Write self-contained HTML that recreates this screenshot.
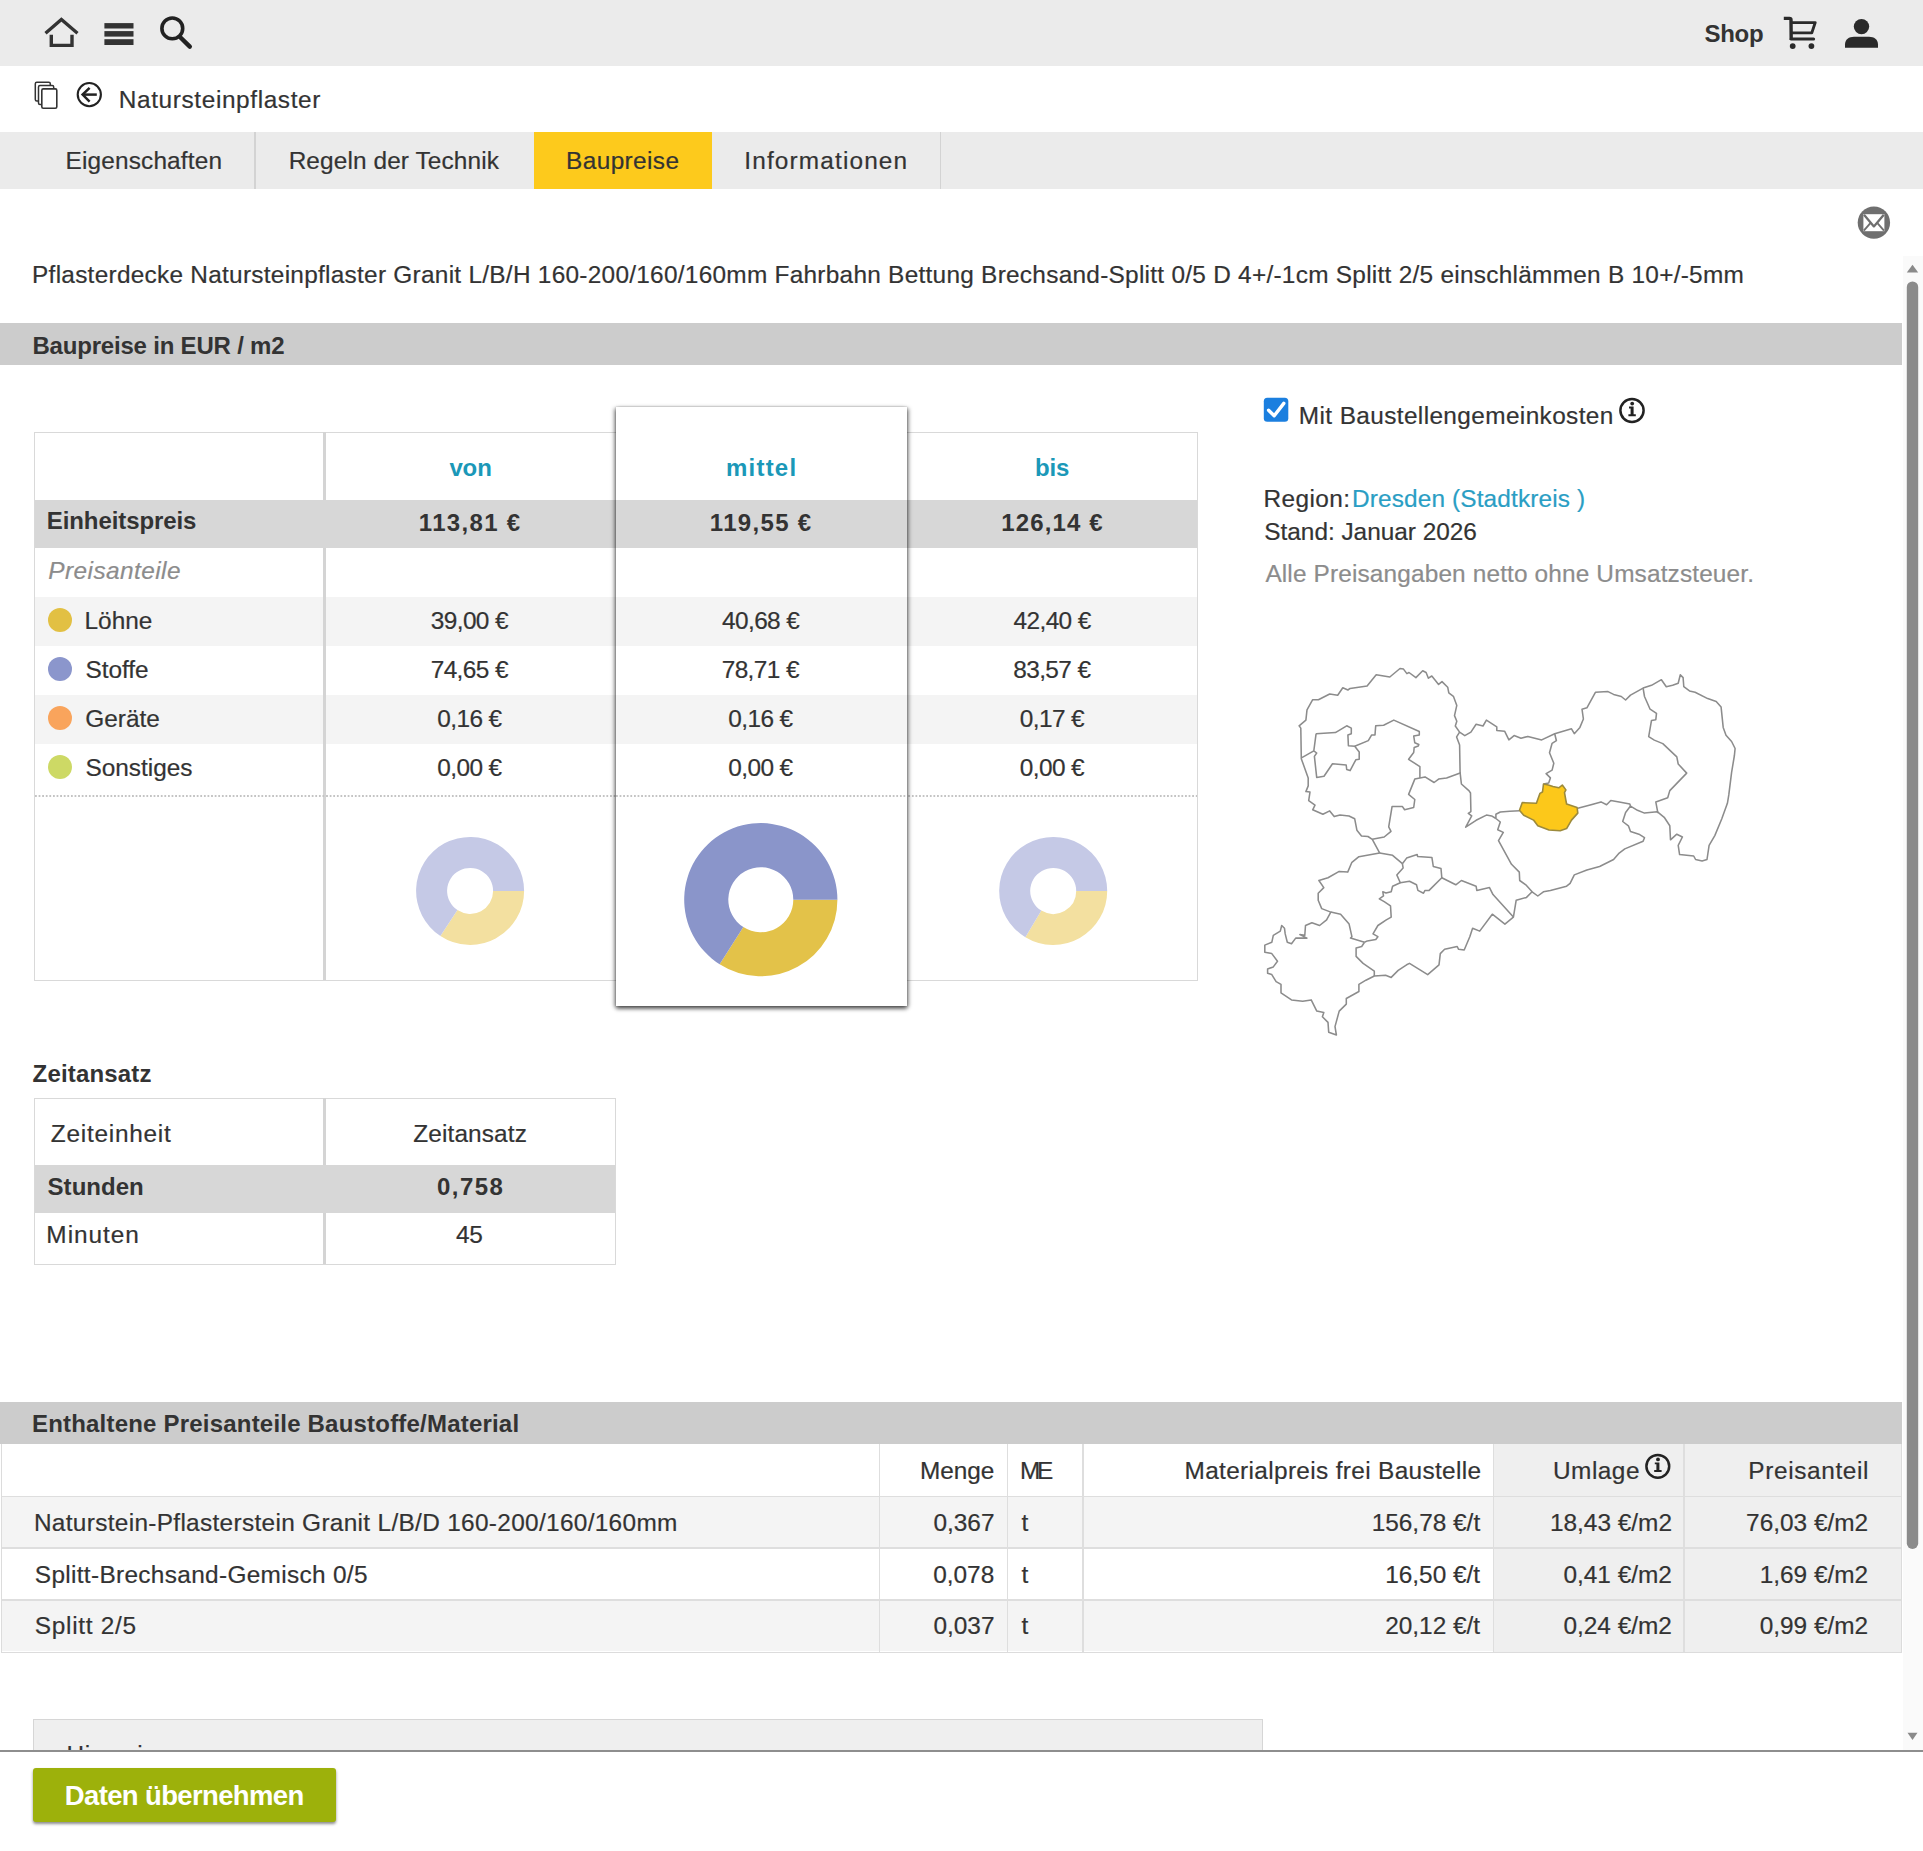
<!DOCTYPE html>
<html><head><meta charset="utf-8"><title>Baupreise</title>
<style>
html,body{margin:0;padding:0;background:#fff;}
body{width:1923px;height:1851px;position:relative;overflow:hidden;font-family:"Liberation Sans",sans-serif;}
.t{position:absolute;white-space:pre;font-family:"Liberation Sans",sans-serif;-webkit-text-stroke:0.2px currentColor;}
.r{position:absolute;}
svg.r{overflow:visible;}
</style></head><body>
<div class="r" style="left:0px;top:0px;width:1923px;height:66px;background:#ebebeb;"></div>
<svg class="r" style="left:0;top:0" width="240" height="66" viewBox="0 0 240 66">
<polyline points="45.5,33.2 61.4,19.4 77.5,33.2" fill="none" stroke="#333" stroke-width="3.3" stroke-linejoin="miter"/>
<polyline points="51.3,34.8 51.3,45.4 72,45.4 72,34.8" fill="none" stroke="#333" stroke-width="3.4"/>
<rect x="104.4" y="23.1" width="29.1" height="5.4" fill="#333"/>
<rect x="104.4" y="31.1" width="29.1" height="5.5" fill="#333"/>
<rect x="104.4" y="39.2" width="29.1" height="5.8" fill="#333"/>
<circle cx="172.3" cy="28.4" r="10.4" fill="none" stroke="#222" stroke-width="3.6"/>
<line x1="180" y1="37" x2="189.8" y2="46.6" stroke="#222" stroke-width="4.4" stroke-linecap="round"/>
</svg>
<div class="t" style="left:1704.58px;top:21.88px;font-size:24.0px;line-height:24.0px;font-weight:700;font-style:normal;color:#333;letter-spacing:-0.340px;-webkit-text-stroke:0;">Shop</div>
<svg class="r" style="left:1770px;top:0" width="130" height="66" viewBox="1770 0 130 66">
<path d="M1783.8,18.4 H1789.4 Q1791,18.4 1791,20 L1791.2,40" fill="none" stroke="#2a2a2a" stroke-width="3.4"/>
<path d="M1790.8,22.6 H1815.2 L1811.8,32.9 H1791.2" fill="none" stroke="#2a2a2a" stroke-width="2.9" stroke-linejoin="round"/>
<path d="M1791.2,39.1 H1813.6" fill="none" stroke="#2a2a2a" stroke-width="3" stroke-linecap="round"/>
<circle cx="1792.7" cy="46.1" r="2.9" fill="#2a2a2a"/>
<circle cx="1811.4" cy="46.1" r="2.9" fill="#2a2a2a"/>
<circle cx="1861.5" cy="26.6" r="7.7" fill="#2a2a2a"/>
<path d="M1845,47.7 V44.5 C1845,39.5 1849,36.8 1854,36.8 H1869 C1874,36.8 1878,39.5 1878,44.5 V47.7 Z" fill="#2a2a2a"/>
</svg>
<svg class="r" style="left:0;top:66px" width="120" height="66" viewBox="0 66 120 66">
<rect x="35.3" y="82.3" width="15" height="18.6" rx="1.5" fill="#fff" stroke="#333" stroke-width="1.5"/>
<rect x="38.5" y="85.6" width="15.2" height="19" rx="1.5" fill="#fff" stroke="#333" stroke-width="1.5"/>
<rect x="41.8" y="88.9" width="15" height="19.3" rx="1.5" fill="#fff" stroke="#333" stroke-width="1.6"/>
<circle cx="89.3" cy="94.6" r="11.6" fill="none" stroke="#222" stroke-width="2.1"/>
<line x1="83" y1="94.6" x2="96.8" y2="94.6" stroke="#222" stroke-width="2.5"/>
<polyline points="89.6,87.8 82.6,94.6 89.6,101.6" fill="none" stroke="#222" stroke-width="2.5"/>
</svg>
<div class="t" style="left:118.85px;top:88.35px;font-size:24.4px;line-height:24.4px;font-weight:400;font-style:normal;color:#333333;letter-spacing:0.608px;">Natursteinpflaster</div>
<div class="r" style="left:0px;top:132px;width:1923px;height:57px;background:#ebebeb;"></div>
<div class="r" style="left:254px;top:132px;width:1.5px;height:57px;background:#d3d3d3;"></div>
<div class="r" style="left:939.5px;top:132px;width:1.5px;height:57px;background:#d3d3d3;"></div>
<div class="r" style="left:533.7px;top:132px;width:178.5px;height:57px;background:#fdca1c;"></div>
<div class="t" style="left:65.55px;top:148.55px;font-size:24.4px;line-height:24.4px;font-weight:400;font-style:normal;color:#333;letter-spacing:0.155px;">Eigenschaften</div>
<div class="t" style="left:288.65px;top:148.55px;font-size:24.4px;line-height:24.4px;font-weight:400;font-style:normal;color:#333;letter-spacing:0.109px;">Regeln der Technik</div>
<div class="t" style="left:566.05px;top:148.55px;font-size:24.4px;line-height:24.4px;font-weight:400;font-style:normal;color:#333;letter-spacing:0.394px;">Baupreise</div>
<div class="t" style="left:744.30px;top:148.55px;font-size:24.4px;line-height:24.4px;font-weight:400;font-style:normal;color:#333;letter-spacing:1.140px;">Informationen</div>
<svg class="r" style="left:1850px;top:200px" width="50" height="50" viewBox="1850 200 50 50">
<circle cx="1873.9" cy="222.6" r="16.2" fill="#6f6f6f"/>
<rect x="1863.4" y="214.2" width="21" height="17" fill="#fff"/>
<polyline points="1864,214.8 1873.9,226.4 1883.8,214.8" fill="none" stroke="#6f6f6f" stroke-width="2.3" stroke-linejoin="round"/>
<line x1="1863.8" y1="230.6" x2="1870.4" y2="223.2" stroke="#6f6f6f" stroke-width="1.9"/>
<line x1="1884" y1="230.6" x2="1877.4" y2="223.2" stroke="#6f6f6f" stroke-width="1.9"/>
</svg>
<div class="t" style="left:32.05px;top:262.65px;font-size:24.4px;line-height:24.4px;font-weight:400;font-style:normal;color:#333;letter-spacing:0.268px;">Pflasterdecke Natursteinpflaster Granit L/B/H 160-200/160/160mm Fahrbahn Bettung Brechsand-Splitt 0/5 D 4+/-1cm Splitt 2/5 einschlämmen B 10+/-5mm</div>
<div class="r" style="left:0px;top:323px;width:1902px;height:42px;background:#cccccc;"></div>
<div class="t" style="left:32.44px;top:333.88px;font-size:24.0px;line-height:24.0px;font-weight:700;font-style:normal;color:#333;letter-spacing:-0.198px;-webkit-text-stroke:0;">Baupreise in EUR / m2</div>
<div class="r" style="left:33.5px;top:432px;width:1164.0px;height:549px;background:#fff;box-sizing:border-box;border:1px solid #d9d9d9;"></div>
<div class="r" style="left:34.5px;top:499.5px;width:1162.0px;height:48.0px;background:#d7d7d7;"></div>
<div class="r" style="left:34.5px;top:597px;width:1162.0px;height:49px;background:#f4f4f4;"></div>
<div class="r" style="left:34.5px;top:695px;width:1162.0px;height:49px;background:#f4f4f4;"></div>
<div class="r" style="left:323px;top:432px;width:3px;height:67.5px;background:#d4d4d4;"></div>
<div class="r" style="left:323px;top:547.5px;width:3px;height:432.5px;background:#d4d4d4;"></div>
<div class="r" style="left:905.5px;top:432px;width:1.5px;height:549px;background:#d4d4d4;"></div>
<div class="r" style="left:34.5px;top:795px;width:1162.0px;height:1.5px;background-image:linear-gradient(to right,#c4c4c4 50%,transparent 50%);background-size:3.6px 1.5px"></div>
<div class="r" style="left:616px;top:407px;width:291px;height:599px;background:#fff;box-shadow:0 3px 4px rgba(0,0,0,0.45), -2px 1px 4px rgba(0,0,0,0.3), 2px 1px 4px rgba(0,0,0,0.3), 0 0 1px rgba(0,0,0,0.25);"></div>
<div class="r" style="left:616px;top:499.5px;width:291px;height:48.0px;background:#d7d7d7;"></div>
<div class="r" style="left:616px;top:597px;width:291px;height:49px;background:#f4f4f4;"></div>
<div class="r" style="left:616px;top:695px;width:291px;height:49px;background:#f4f4f4;"></div>
<div class="r" style="left:616px;top:795px;width:291px;height:1.5px;background-image:linear-gradient(to right,#c4c4c4 50%,transparent 50%);background-size:3.6px 1.5px"></div>
<div class="t" style="left:449.38px;top:455.98px;font-size:24.0px;line-height:24.0px;font-weight:700;font-style:normal;color:#1b98b8;letter-spacing:-0.120px;-webkit-text-stroke:0;">von</div>
<div class="t" style="left:725.94px;top:455.98px;font-size:24.0px;line-height:24.0px;font-weight:700;font-style:normal;color:#1b98b8;letter-spacing:1.232px;-webkit-text-stroke:0;">mittel</div>
<div class="t" style="left:1034.94px;top:455.98px;font-size:24.0px;line-height:24.0px;font-weight:700;font-style:normal;color:#1b98b8;letter-spacing:-0.080px;-webkit-text-stroke:0;">bis</div>
<div class="t" style="left:46.74px;top:509.18px;font-size:24.0px;line-height:24.0px;font-weight:700;font-style:normal;color:#333;letter-spacing:-0.083px;-webkit-text-stroke:0;">Einheitspreis</div>
<div class="t" style="left:418.86px;top:511.28px;font-size:24.0px;line-height:24.0px;font-weight:700;font-style:normal;color:#333;letter-spacing:1.309px;-webkit-text-stroke:0;">113,81 €</div>
<div class="t" style="left:709.86px;top:511.28px;font-size:24.0px;line-height:24.0px;font-weight:700;font-style:normal;color:#333;letter-spacing:1.309px;-webkit-text-stroke:0;">119,55 €</div>
<div class="t" style="left:1001.36px;top:511.28px;font-size:24.0px;line-height:24.0px;font-weight:700;font-style:normal;color:#333;letter-spacing:1.120px;-webkit-text-stroke:0;">126,14 €</div>
<div class="t" style="left:48.27px;top:558.75px;font-size:24.4px;line-height:24.4px;font-weight:400;font-style:italic;color:#8c8c8c;letter-spacing:0.436px;">Preisanteile</div>
<div class="r" style="left:47.5px;top:608.1px;width:24.4px;height:24.4px;border-radius:50%;background:#e2c043"></div>
<div class="t" style="left:84.55px;top:608.65px;font-size:24.4px;line-height:24.4px;font-weight:400;font-style:normal;color:#333;">Löhne</div>
<div class="t" style="left:430.81px;top:608.65px;font-size:24.4px;line-height:24.4px;font-weight:400;font-style:normal;color:#333;letter-spacing:-0.600px;">39,00 €</div>
<div class="t" style="left:722.06px;top:608.65px;font-size:24.4px;line-height:24.4px;font-weight:400;font-style:normal;color:#333;letter-spacing:-0.604px;">40,68 €</div>
<div class="t" style="left:1013.56px;top:608.65px;font-size:24.4px;line-height:24.4px;font-weight:400;font-style:normal;color:#333;letter-spacing:-0.604px;">42,40 €</div>
<div class="r" style="left:47.5px;top:657.1px;width:24.4px;height:24.4px;border-radius:50%;background:#8b96cc"></div>
<div class="t" style="left:85.40px;top:657.65px;font-size:24.4px;line-height:24.4px;font-weight:400;font-style:normal;color:#333;">Stoffe</div>
<div class="t" style="left:430.68px;top:657.65px;font-size:24.4px;line-height:24.4px;font-weight:400;font-style:normal;color:#333;letter-spacing:-0.598px;">74,65 €</div>
<div class="t" style="left:721.68px;top:657.65px;font-size:24.4px;line-height:24.4px;font-weight:400;font-style:normal;color:#333;letter-spacing:-0.598px;">78,71 €</div>
<div class="t" style="left:1013.24px;top:657.65px;font-size:24.4px;line-height:24.4px;font-weight:400;font-style:normal;color:#333;letter-spacing:-0.599px;">83,57 €</div>
<div class="r" style="left:47.5px;top:706.1px;width:24.4px;height:24.4px;border-radius:50%;background:#f9a45c"></div>
<div class="t" style="left:85.28px;top:706.65px;font-size:24.4px;line-height:24.4px;font-weight:400;font-style:normal;color:#333;">Geräte</div>
<div class="t" style="left:437.28px;top:706.65px;font-size:24.4px;line-height:24.4px;font-weight:400;font-style:normal;color:#333;letter-spacing:-0.598px;">0,16 €</div>
<div class="t" style="left:728.28px;top:706.65px;font-size:24.4px;line-height:24.4px;font-weight:400;font-style:normal;color:#333;letter-spacing:-0.598px;">0,16 €</div>
<div class="t" style="left:1019.78px;top:706.65px;font-size:24.4px;line-height:24.4px;font-weight:400;font-style:normal;color:#333;letter-spacing:-0.598px;">0,17 €</div>
<div class="r" style="left:47.5px;top:755.1px;width:24.4px;height:24.4px;border-radius:50%;background:#cdd965"></div>
<div class="t" style="left:85.40px;top:755.65px;font-size:24.4px;line-height:24.4px;font-weight:400;font-style:normal;color:#333;">Sonstiges</div>
<div class="t" style="left:437.28px;top:755.65px;font-size:24.4px;line-height:24.4px;font-weight:400;font-style:normal;color:#333;letter-spacing:-0.598px;">0,00 €</div>
<div class="t" style="left:728.28px;top:755.65px;font-size:24.4px;line-height:24.4px;font-weight:400;font-style:normal;color:#333;letter-spacing:-0.598px;">0,00 €</div>
<div class="t" style="left:1019.78px;top:755.65px;font-size:24.4px;line-height:24.4px;font-weight:400;font-style:normal;color:#333;letter-spacing:-0.598px;">0,00 €</div>
<svg class="r" style="left:0;top:0" width="1200" height="1010" viewBox="0 0 1200 1010"><path d="M524.1,890.9 A54,54 0 0 1 440.40,936.00 L457.45,910.11 A23,23 0 0 0 493.1,890.9 Z" fill="#f3e0a0"/><path d="M440.40,936.00 A54,54 0 1 1 524.1,890.9 L493.1,890.9 A23,23 0 1 0 457.45,910.11 Z" fill="#c5c9e6"/><path d="M837.4,899.7 A76.6,76.6 0 0 1 719.64,964.30 L743.34,927.11 A32.5,32.5 0 0 0 793.3,899.7 Z" fill="#e3c249"/><path d="M719.64,964.30 A76.6,76.6 0 1 1 837.4,899.7 L793.3,899.7 A32.5,32.5 0 1 0 743.34,927.11 Z" fill="#8a95ca"/><path d="M1107.2,890.9 A54,54 0 0 1 1025.38,937.18 L1041.35,910.61 A23,23 0 0 0 1076.2,890.9 Z" fill="#f3e0a0"/><path d="M1025.38,937.18 A54,54 0 1 1 1107.2,890.9 L1076.2,890.9 A23,23 0 1 0 1041.35,910.61 Z" fill="#c5c9e6"/></svg>
<svg class="r" style="left:1255px;top:390px" width="400" height="40" viewBox="1255 390 400 40">
<rect x="1263.8" y="397.8" width="24.5" height="24" rx="3.5" fill="#1b7fdf"/>
<polyline points="1268.6,410.2 1274.2,415.8 1283.8,403.4" fill="none" stroke="#fff" stroke-width="3.4" stroke-linecap="round" stroke-linejoin="round"/>
<circle cx="1632" cy="410.5" r="11.6" fill="none" stroke="#222" stroke-width="2.5"/>
<circle cx="1632.2" cy="403.6" r="1.9" fill="#222"/>
<path d="M1629,406.6 H1633.6 V414.2 H1635.8 V416.2 H1628.4 V414.2 H1630.6 V408.4 H1629 Z" fill="#222"/>
</svg>
<div class="t" style="left:1298.85px;top:403.65px;font-size:24.4px;line-height:24.4px;font-weight:400;font-style:normal;color:#333;letter-spacing:0.377px;">Mit Baustellengemeinkosten</div>
<div class="t" style="left:1263.45px;top:486.55px;font-size:24.4px;line-height:24.4px;font-weight:400;font-style:normal;color:#333;letter-spacing:0.432px;">Region:</div>
<div class="t" style="left:1352.05px;top:486.55px;font-size:24.4px;line-height:24.4px;font-weight:400;font-style:normal;color:#2a9ec4;letter-spacing:0.128px;">Dresden (Stadtkreis )</div>
<div class="t" style="left:1264.30px;top:520.35px;font-size:24.4px;line-height:24.4px;font-weight:400;font-style:normal;color:#333;letter-spacing:-0.020px;">Stand: Januar 2026</div>
<div class="t" style="left:1265.40px;top:562.45px;font-size:24.4px;line-height:24.4px;font-weight:400;font-style:normal;color:#8c8c8c;letter-spacing:0.144px;">Alle Preisangaben netto ohne Umsatzsteuer.</div>
<svg class="r" style="left:1250px;top:650px" width="500" height="400" viewBox="1250 650 500 400"><polygon points="1299.1,725.8 1305.9,720.1 1307,709.9 1312.7,699.7 1318.4,699.7 1329.7,694 1337.7,695.2 1342.8,687.8 1347.9,690 1350.1,688.4 1367.1,686.1 1376.2,674.7 1389.8,677 1400,668.5 1403.5,669.1 1406.9,673.6 1409,672.5 1415.9,677.6 1422.7,670.8 1426.1,672.5 1428.4,678.2 1431.8,676 1438.6,684.4 1442,681.6 1447.7,687.2 1448.8,692.9 1453.4,696.3 1456.8,705.4 1454.5,715.6 1456.8,721.3 1455.3,726 1459.6,732.1 1464.8,735.6 1470.9,732.1 1476.1,724.3 1483,726 1486.4,720.1 1496.8,726.9 1496.8,730.4 1504.6,731.2 1508.9,739.9 1514.1,735.6 1521,738.2 1527.9,736.4 1541.7,739.9 1554.7,733.8 1571.5,728.8 1574.3,733.7 1579.9,727.4 1583.4,719 1582,709.2 1586.9,707.8 1595.4,692.3 1608,691.6 1613.6,694.4 1621.3,696.5 1625.6,700 1630.5,695.1 1643.1,688.1 1651.5,685.3 1661.4,679.7 1666.3,686.7 1672.6,685.3 1678.2,683.2 1680.3,674.7 1683.1,677.6 1683.8,686.7 1689.5,690.9 1695.1,692.3 1707.7,698.6 1716.2,701.4 1721.1,707.1 1723.2,727.4 1726,735.2 1731.6,741.5 1735.1,748.5 1734.4,755.5 1731.6,772.4 1728.8,794.9 1727.4,803.3 1721.8,818.7 1714.8,835.6 1709.1,845.4 1707,859.5 1702.1,860.9 1695.6,859.5 1693.7,856 1679.6,854.6 1678.2,845.4 1682.4,837 1676.8,834.2 1670.5,839.8 1669.8,825.8 1664.2,817.3 1657.2,811.7 1644.5,813.1 1637.5,810.3 1630.5,806.1 1625.6,812.4 1622.7,821.5 1628.4,825.8 1630.5,831.4 1638.9,834.2 1644.5,837.7 1643.1,841.2 1624.8,848.9 1619.2,853.1 1613.6,859.5 1599.6,866.5 1586.9,870 1574.3,874.9 1570.1,883.3 1566.6,886.2 1550.4,890.4 1543.4,891.8 1537.8,896 1532.1,891.8 1526.5,897.4 1516.2,900.2 1513.4,917.1 1504.9,924.1 1492.3,914.2 1479.7,931.1 1472.6,928.3 1469.8,936.7 1464.2,950 1458.6,949.3 1457.2,946.5 1444.6,949.3 1440.3,953.6 1439,964.8 1427.7,974.6 1409.5,963.4 1406.6,964.8 1398.2,970.4 1391.2,977.4 1385.6,975.3 1374.3,976 1365.9,980.2 1358.9,984.4 1358.9,991.5 1346.3,998.5 1346.3,1004.1 1339.2,1011.1 1335,1026.6 1336.4,1035 1328.7,1032.2 1328,1022.4 1322.4,1016.7 1323.8,1012.5 1316.8,1011.1 1311.2,999.9 1302.7,1001.3 1291.5,999.9 1281,992.9 1281,984.4 1276.1,981.6 1271.8,974.6 1267.6,973.2 1267.6,969 1273.3,966.9 1277.5,961.3 1271.8,953.6 1264.8,952.2 1264.8,945.1 1271.8,942.3 1273.3,935.3 1280.3,931.1 1281.7,925.5 1284.5,928.3 1285.2,933.9 1287.3,942.3 1291.5,943.7 1295.7,938.1 1307,938.1 1299.9,934.6 1304.8,935.3 1305.5,925.5 1311.9,922.7 1319.6,925.5 1326.6,919.9 1330.8,912.1 1321.7,908.6 1318.2,900.2 1318.2,893.2 1323.8,887.6 1318.9,880.5 1328,877.7 1339.2,871.4 1347.7,872.1 1351.9,862.3 1358.9,856.7 1379.6,852.9 1372.3,839.3 1368,836.5 1361.5,835.9 1356.9,830.2 1354.7,818.8 1349,816 1340,815 1334.2,816.6 1329.7,810.9 1322.9,814.3 1312.7,809.8 1315,805.2 1308.7,800.7 1310,792 1305.9,791.6 1308.2,785.9 1308.2,778 1301.3,758.7 1300.8,728.1 1299.1,725.8" fill="#fff" stroke="#8c8c8c" stroke-width="1.55" stroke-linejoin="round"/><polyline points="1316.1,733.7 1335.4,732.6 1346.7,725.8 1351.3,728.1 1351.3,733.7 1347.9,734.9 1348.4,745.7 1354.7,746.2 1359.2,751.9 1359.2,759.3 1355.8,759.8 1350.1,770.6 1346.7,769.5 1346.2,765 1332.5,763.8 1324,776.3 1316.7,777.4 1314.4,756.4 1316.7,753 1313.8,750.8 1316.1,733.7" fill="none" stroke="#8c8c8c" stroke-width="1.55" stroke-linejoin="round"/><polyline points="1301.9,757.6 1313.8,750.8" fill="none" stroke="#8c8c8c" stroke-width="1.55" stroke-linejoin="round"/><polyline points="1354.7,746.2 1368.3,740.6 1371.7,734.9 1375,734.9 1375.7,725.8 1383.6,725.2 1393.8,720.1 1419.3,731.5 1419.3,734.9 1413.7,736 1414.8,742.8 1418.8,744.5 1418.3,746 1414.2,747.4 1413.7,752.5 1408.6,759.3 1419.9,766.6 1419.9,778" fill="none" stroke="#8c8c8c" stroke-width="1.55" stroke-linejoin="round"/><polyline points="1372.3,839.3 1384.2,837 1391,831.3 1388.7,826.8 1392.1,806.4 1402.3,806.4 1404.6,809.8 1413.7,807.5 1414.8,799.5 1408.6,794.4 1414.8,779.1 1419.9,778" fill="none" stroke="#8c8c8c" stroke-width="1.55" stroke-linejoin="round"/><polyline points="1419.9,778 1425,776.9 1434.1,782.5 1438.6,779.1 1446.6,778 1460.2,772.9" fill="none" stroke="#8c8c8c" stroke-width="1.55" stroke-linejoin="round"/><polyline points="1459.6,732.1 1456.6,736.9 1459.6,745.1 1460.1,772.7 1461.4,784 1469.1,790.9 1470.5,793 1470.9,811.6 1468.3,813.3 1471.7,815.9 1465.7,827.2 1476.1,820.3 1486.4,815.1 1491.6,815.9 1495.9,818.5" fill="none" stroke="#8c8c8c" stroke-width="1.55" stroke-linejoin="round"/><polyline points="1495.9,818.5 1495.9,814.2 1500.3,812 1509.8,811.2 1519.7,810.8" fill="none" stroke="#8c8c8c" stroke-width="1.55" stroke-linejoin="round"/><polyline points="1495.9,818.5 1500.3,822 1497.7,829.8 1503.3,832.4 1498.5,840.6 1511.5,864.3 1519.3,872.1 1519.7,880.5 1525.8,884.8 1532.1,891.8" fill="none" stroke="#8c8c8c" stroke-width="1.55" stroke-linejoin="round"/><polyline points="1441.8,877.7 1455.8,884.8 1461.4,880.5 1476.1,886.2 1476.8,890.4 1489.5,887.6 1493,894.6 1513.4,917.1" fill="none" stroke="#8c8c8c" stroke-width="1.55" stroke-linejoin="round"/><polyline points="1402.4,863.7 1406.6,858.1 1417.2,854.6 1417.7,856.6 1431.9,857.4 1433.3,866.5 1441,868.6 1441.8,877.7 1429.1,890.4 1425,890.4 1423.5,893.2 1417.9,890.4 1416.5,884.8 1409.5,881.2 1400.3,882.7 1396.8,874.9 1403.1,867.9 1402.4,863.7" fill="none" stroke="#8c8c8c" stroke-width="1.55" stroke-linejoin="round"/><polyline points="1379.6,852.9 1392.6,855.3 1402.4,863.7" fill="none" stroke="#8c8c8c" stroke-width="1.55" stroke-linejoin="round"/><polyline points="1400.3,882.7 1392.6,886.2 1391.2,891.8 1386,893 1382.8,891.8 1383.5,895.8 1379.3,898.8 1384.2,901.6 1390.5,905.8 1391.2,917.1 1386.3,919.9 1377.9,925.5 1373,933.9 1377.9,936.7 1375.8,939.5 1367.3,940.9 1364.5,942.3" fill="none" stroke="#8c8c8c" stroke-width="1.55" stroke-linejoin="round"/><polyline points="1330.8,912.1 1340.6,914.2 1349.1,924.1 1351.9,936.7 1350.5,938.1 1364.5,942.3" fill="none" stroke="#8c8c8c" stroke-width="1.55" stroke-linejoin="round"/><polyline points="1364.5,942.3 1361.7,946.5 1356.1,947.9 1356.1,956.4 1363.1,963.4 1374.3,971.1 1374.3,976" fill="none" stroke="#8c8c8c" stroke-width="1.55" stroke-linejoin="round"/><polyline points="1643.1,688.1 1644.5,696.5 1650.1,709.2 1656.5,713.4 1655.8,719.7 1651.5,720.4 1648.7,736.6 1654.3,740.1 1662.8,743.6 1676.8,756.9 1678.2,764 1686.7,773.1 1669.8,790.6 1667.7,797.7 1655.8,801.9 1657.9,813.1" fill="none" stroke="#8c8c8c" stroke-width="1.55" stroke-linejoin="round"/><polyline points="1630.5,806.1 1629.8,804 1619.2,801.9 1610.8,800.5 1606.6,804.7 1601,801.9 1591.1,804.7 1577.8,808.2" fill="none" stroke="#8c8c8c" stroke-width="1.55" stroke-linejoin="round"/><polyline points="1554.7,733.8 1556.4,740.7 1552.1,743.3 1549.5,752.8 1553.8,763.2 1552.1,770.1 1546.1,773.6 1550.4,777.9 1548.7,783.1 1543.5,784" fill="none" stroke="#8c8c8c" stroke-width="1.55" stroke-linejoin="round"/><polygon points="1543.5,784 1548.3,785 1553,786.5 1558.8,787.8 1562.3,785 1565.9,789.9 1564.5,792.6 1565.9,800.5 1566.6,804 1577.1,807.5 1577.8,813.1 1571.5,820.1 1566.6,828.6 1560.2,830.7 1549,830 1537.8,825.8 1533.5,820.1 1523.7,815.2 1519.5,810.3 1522.3,802.6 1536.4,803.3 1539.9,793.4 1542.5,792 1543.5,784" fill="#fcc81a" stroke="#9c8a3c" stroke-width="1.6" stroke-linejoin="round"/></svg>
<div class="t" style="left:32.58px;top:1061.78px;font-size:24.0px;line-height:24.0px;font-weight:700;font-style:normal;color:#333;letter-spacing:0.167px;-webkit-text-stroke:0;">Zeitansatz</div>
<div class="r" style="left:33.5px;top:1098px;width:582.0px;height:166.79999999999995px;background:#fff;box-sizing:border-box;border:1px solid #d9d9d9;"></div>
<div class="r" style="left:34.5px;top:1165px;width:580.0px;height:48px;background:#d7d7d7;"></div>
<div class="r" style="left:323px;top:1098px;width:3px;height:67px;background:#d4d4d4;"></div>
<div class="r" style="left:323px;top:1213px;width:3px;height:50.799999999999955px;background:#d4d4d4;"></div>
<div class="t" style="left:50.87px;top:1122.25px;font-size:24.4px;line-height:24.4px;font-weight:400;font-style:normal;color:#333;letter-spacing:0.737px;">Zeiteinheit</div>
<div class="t" style="left:413.32px;top:1121.65px;font-size:24.4px;line-height:24.4px;font-weight:400;font-style:normal;color:#333;letter-spacing:0.116px;">Zeitansatz</div>
<div class="t" style="left:47.58px;top:1175.18px;font-size:24.0px;line-height:24.0px;font-weight:700;font-style:normal;color:#333;letter-spacing:0.027px;-webkit-text-stroke:0;">Stunden</div>
<div class="t" style="left:436.94px;top:1175.48px;font-size:24.0px;line-height:24.0px;font-weight:700;font-style:normal;color:#333;letter-spacing:1.470px;-webkit-text-stroke:0;">0,758</div>
<div class="t" style="left:46.35px;top:1223.45px;font-size:24.4px;line-height:24.4px;font-weight:400;font-style:normal;color:#333;letter-spacing:0.966px;">Minuten</div>
<div class="t" style="left:456.10px;top:1223.05px;font-size:24.4px;line-height:24.4px;font-weight:400;font-style:normal;color:#333;letter-spacing:-0.4px;">45</div>
<div class="r" style="left:0px;top:1401.7px;width:1902px;height:42.299999999999955px;background:#cccccc;"></div>
<div class="t" style="left:31.94px;top:1412.28px;font-size:24.0px;line-height:24.0px;font-weight:700;font-style:normal;color:#333;letter-spacing:0.203px;-webkit-text-stroke:0;">Enthaltene Preisanteile Baustoffe/Material</div>
<div class="r" style="left:0.5px;top:1444px;width:1901.8px;height:208.5px;background:#fff;box-sizing:border-box;border-left:1px solid #dcdcdc;border-right:1px solid #dcdcdc;border-bottom:1.5px solid #dcdcdc;"></div>
<div class="r" style="left:1.5px;top:1496.7px;width:1899.8px;height:51.09999999999991px;background:#f4f4f4;"></div>
<div class="r" style="left:1.5px;top:1599.7px;width:1899.8px;height:51.799999999999955px;background:#f4f4f4;"></div>
<div class="r" style="left:1493.5px;top:1444px;width:407.79999999999995px;height:207.5px;background:#efefef;"></div>
<div class="r" style="left:1.5px;top:1495.5px;width:1899.8px;height:1.5px;background:#dedede;"></div>
<div class="r" style="left:1.5px;top:1547.3px;width:1899.8px;height:1.5px;background:#dedede;"></div>
<div class="r" style="left:1.5px;top:1599px;width:1899.8px;height:1.5px;background:#dedede;"></div>
<div class="r" style="left:879.3px;top:1444px;width:1.2000000000000455px;height:207.5px;background:#dedede;"></div>
<div class="r" style="left:1006.8px;top:1444px;width:1.2000000000000455px;height:207.5px;background:#dedede;"></div>
<div class="r" style="left:1082.4px;top:1444px;width:1.2000000000000455px;height:207.5px;background:#dedede;"></div>
<div class="r" style="left:1493px;top:1444px;width:1.2000000000000455px;height:207.5px;background:#dedede;"></div>
<div class="r" style="left:1683.4px;top:1444px;width:1.2000000000000455px;height:207.5px;background:#dedede;"></div>
<div class="t" style="left:920.05px;top:1459.35px;font-size:24.4px;line-height:24.4px;font-weight:400;font-style:normal;color:#333;letter-spacing:-0.073px;">Menge</div>
<div class="t" style="left:1019.95px;top:1459.35px;font-size:24.4px;line-height:24.4px;font-weight:400;font-style:normal;color:#333;letter-spacing:-3.172px;">ME</div>
<div class="t" style="left:1184.55px;top:1459.35px;font-size:24.4px;line-height:24.4px;font-weight:400;font-style:normal;color:#333;letter-spacing:0.338px;">Materialpreis frei Baustelle</div>
<div class="t" style="left:1552.97px;top:1459.35px;font-size:24.4px;line-height:24.4px;font-weight:400;font-style:normal;color:#333;letter-spacing:0.494px;">Umlage</div>
<div class="t" style="left:1748.35px;top:1459.35px;font-size:24.4px;line-height:24.4px;font-weight:400;font-style:normal;color:#333;letter-spacing:0.631px;">Preisanteil</div>
<svg class="r" style="left:1640px;top:1450px" width="40" height="35" viewBox="1640 1450 40 35">
<circle cx="1657.8" cy="1466.3" r="11.4" fill="none" stroke="#222" stroke-width="2.5"/>
<circle cx="1658" cy="1459.4" r="1.9" fill="#222"/>
<path d="M1654.8,1462.4 H1659.4 V1470 H1661.6 V1472 H1654.2 V1470 H1656.4 V1464.2 H1654.8 Z" fill="#222"/>
</svg>
<div class="t" style="left:33.95px;top:1510.85px;font-size:24.4px;line-height:24.4px;font-weight:400;font-style:normal;color:#333;letter-spacing:0.316px;">Naturstein-Pflasterstein Granit L/B/D 160-200/160/160mm</div>
<div class="t" style="left:933.42px;top:1510.85px;font-size:24.4px;line-height:24.4px;font-weight:400;font-style:normal;color:#333;">0,367</div>
<div class="t" style="left:1021.53px;top:1510.85px;font-size:24.4px;line-height:24.4px;font-weight:400;font-style:normal;color:#333;">t</div>
<div class="t" style="left:1371.66px;top:1510.85px;font-size:24.4px;line-height:24.4px;font-weight:400;font-style:normal;color:#333;">156,78 €/t</div>
<div class="t" style="left:1549.92px;top:1510.85px;font-size:24.4px;line-height:24.4px;font-weight:400;font-style:normal;color:#333;">18,43 €/m2</div>
<div class="t" style="left:1746.12px;top:1510.85px;font-size:24.4px;line-height:24.4px;font-weight:400;font-style:normal;color:#333;">76,03 €/m2</div>
<div class="t" style="left:34.80px;top:1562.55px;font-size:24.4px;line-height:24.4px;font-weight:400;font-style:normal;color:#333;letter-spacing:0.324px;">Splitt-Brechsand-Gemisch 0/5</div>
<div class="t" style="left:933.18px;top:1562.55px;font-size:24.4px;line-height:24.4px;font-weight:400;font-style:normal;color:#333;">0,078</div>
<div class="t" style="left:1021.53px;top:1562.55px;font-size:24.4px;line-height:24.4px;font-weight:400;font-style:normal;color:#333;">t</div>
<div class="t" style="left:1385.21px;top:1562.55px;font-size:24.4px;line-height:24.4px;font-weight:400;font-style:normal;color:#333;">16,50 €/t</div>
<div class="t" style="left:1563.46px;top:1562.55px;font-size:24.4px;line-height:24.4px;font-weight:400;font-style:normal;color:#333;">0,41 €/m2</div>
<div class="t" style="left:1759.66px;top:1562.55px;font-size:24.4px;line-height:24.4px;font-weight:400;font-style:normal;color:#333;">1,69 €/m2</div>
<div class="t" style="left:34.80px;top:1614.25px;font-size:24.4px;line-height:24.4px;font-weight:400;font-style:normal;color:#333;letter-spacing:0.695px;">Splitt 2/5</div>
<div class="t" style="left:933.42px;top:1614.25px;font-size:24.4px;line-height:24.4px;font-weight:400;font-style:normal;color:#333;">0,037</div>
<div class="t" style="left:1021.53px;top:1614.25px;font-size:24.4px;line-height:24.4px;font-weight:400;font-style:normal;color:#333;">t</div>
<div class="t" style="left:1385.21px;top:1614.25px;font-size:24.4px;line-height:24.4px;font-weight:400;font-style:normal;color:#333;">20,12 €/t</div>
<div class="t" style="left:1563.46px;top:1614.25px;font-size:24.4px;line-height:24.4px;font-weight:400;font-style:normal;color:#333;">0,24 €/m2</div>
<div class="t" style="left:1759.66px;top:1614.25px;font-size:24.4px;line-height:24.4px;font-weight:400;font-style:normal;color:#333;">0,99 €/m2</div>
<div class="r" style="left:0;top:1700px;width:1902px;height:50px;overflow:hidden"><div class="r" style="left:33.3px;top:19px;width:1230.2px;height:60px;box-sizing:border-box;border:1px solid #d6d6d6;background:#efefef"></div>
<div class="t" style="left:66.6px;top:43.3px;font-size:24.4px;line-height:24.4px;font-weight:400;color:#333;letter-spacing:0.6px">Hinweis</div>
</div>
<div class="r" style="left:1902.5px;top:256px;width:20.5px;height:1494px;background:#fafafa;"></div>
<svg class="r" style="left:1900px;top:256px" width="23" height="1494" viewBox="1900 256 23 1494">
<polygon points="1906.8,272.6 1912.5,264.8 1918.2,272.6" fill="#8a8a8a"/>
<rect x="1906.8" y="281.4" width="11.4" height="1267.6" rx="5.7" fill="#8b8b8b"/>
<polygon points="1907.5,1732.8 1917.5,1732.8 1912.5,1740" fill="#8a8a8a"/>
</svg>
<div class="r" style="left:0px;top:1750px;width:1923px;height:101px;background:#fff;"></div>
<div class="r" style="left:0px;top:1749.5px;width:1923px;height:2.0px;background:#8e8e8e;"></div>
<div class="r" style="left:33.3px;top:1768px;width:302.7px;height:54px;background:#9db10b;border-radius:3px;box-shadow:0 2px 3px rgba(0,0,0,0.45);"></div>
<div class="t" style="left:64.81px;top:1781.62px;font-size:27.5px;line-height:27.5px;font-weight:700;font-style:normal;color:#fff;letter-spacing:-0.638px;-webkit-text-stroke:0;">Daten übernehmen</div>
</body></html>
